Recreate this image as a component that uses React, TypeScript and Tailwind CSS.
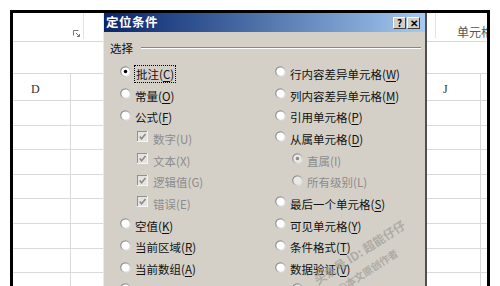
import React from "react";

const FONT = { fontFamily: '"Noto Sans CJK SC", "Noto Sans", sans-serif' };

function Radio({ checked = false, disabled = false }: { checked?: boolean; disabled?: boolean }) {
  return (
    <svg width="11" height="11" viewBox="0 0 12 12" className="shrink-0">
      <defs>
        <linearGradient id="rg" x1="0" y1="0" x2="1" y2="1">
          <stop offset="0" stopColor="#6e6e6e" />
          <stop offset="0.55" stopColor="#b8b8b8" />
          <stop offset="1" stopColor="#ffffff" />
        </linearGradient>
      </defs>
      <circle cx="6" cy="6" r="5.8" fill="url(#rg)" />
      <circle cx="6" cy="6" r="4.5" fill={disabled ? "#ebe9e5" : "#ffffff"} />
      {checked && <circle cx="6" cy="6" r="1.9" fill={disabled ? "#8a8a8a" : "#000"} />}
    </svg>
  );
}

function Check() {
  return (
    <svg width="11" height="11" viewBox="0 0 12 12" className="shrink-0">
      <rect x="0" y="0" width="12" height="12" fill="#ffffff" />
      <rect x="0" y="0" width="11" height="11" fill="#8a8a8a" />
      <rect x="1" y="1" width="10" height="10" fill="#e6e4e0" />
      <polyline points="3,6 5,8.5 9.3,3.4" fill="none" stroke="#8a8a8a" strokeWidth="1.7" />
    </svg>
  );
}

type Item = {
  kind: "radio" | "check" | "sub";
  label: string;
  key: string;
  checked?: boolean;
  disabled?: boolean;
  focus?: boolean;
};

function Label({ label, k, disabled, focus }: { label: string; k: string; disabled?: boolean; focus?: boolean }) {
  return (
    <span
      className={
        "text-[11.5px] leading-[15px] whitespace-nowrap " +
        (disabled ? "text-[#8c8c8c] " : "text-[#111] ") +
        (focus ? "outline outline-1 outline-dotted outline-black outline-offset-0 px-[1px]" : "")
      }
    >
      {label}(<span className={disabled ? "" : "underline underline-offset-2"}>{k}</span>)
    </span>
  );
}

function Row({ item }: { item: Item }) {
  const pad = item.kind === "radio" ? "pl-0" : "pl-[17px]";
  return (
    <div className={"h-[21.7px] flex items-center " + pad}>
      {item.kind === "check" ? <Check /> : <Radio checked={item.checked} disabled={item.disabled} />}
      <div className={item.kind === "check" ? "ml-[5px]" : "ml-[4px]"}>
        <Label label={item.label} k={item.key} disabled={item.disabled} focus={item.focus} />
      </div>
    </div>
  );
}

const left: Item[] = [
  { kind: "radio", label: "批注", key: "C", checked: true, focus: true },
  { kind: "radio", label: "常量", key: "O" },
  { kind: "radio", label: "公式", key: "F" },
  { kind: "check", label: "数字", key: "U", disabled: true },
  { kind: "check", label: "文本", key: "X", disabled: true },
  { kind: "check", label: "逻辑值", key: "G", disabled: true },
  { kind: "check", label: "错误", key: "E", disabled: true },
  { kind: "radio", label: "空值", key: "K" },
  { kind: "radio", label: "当前区域", key: "R" },
  { kind: "radio", label: "当前数组", key: "A" },
  { kind: "radio", label: "对象", key: "B" },
];

const right: Item[] = [
  { kind: "radio", label: "行内容差异单元格", key: "W" },
  { kind: "radio", label: "列内容差异单元格", key: "M" },
  { kind: "radio", label: "引用单元格", key: "P" },
  { kind: "radio", label: "从属单元格", key: "D" },
  { kind: "sub", label: "直属", key: "I", checked: true, disabled: true },
  { kind: "sub", label: "所有级别", key: "L", disabled: true },
  { kind: "radio", label: "最后一个单元格", key: "S" },
  { kind: "radio", label: "可见单元格", key: "Y" },
  { kind: "radio", label: "条件格式", key: "T" },
  { kind: "radio", label: "数据验证", key: "V" },
  { kind: "sub", label: "全部", key: "L", disabled: true },
];

function SheetRow() {
  return (
    <div className="h-[24.6px] border-b border-[#dadada] flex">
      <div className="w-[58px] border-r border-[#dadada]" />
      <div className="flex-1" />
      <div className="w-[69px] border-r border-[#dadada]" />
      <div className="w-[6px]" />
    </div>
  );
}

function CaptionButton({ children }: { children: React.ReactNode }) {
  return (
    <div className="w-[13px] h-[12px] bg-[#d4d0c8] border-t border-l border-white border-r border-b border-r-[#404040] border-b-[#404040] flex items-center justify-center text-[10px] leading-none font-bold text-black">
      {children}
    </div>
  );
}

export default function App() {
  return (
    <div className="w-[500px] h-[286px] bg-white overflow-hidden pl-[10px] pt-[10px]" style={FONT}>
      <div className="relative w-[480px] h-[300px] border-[3px] border-b-0 border-black bg-white">
        {/* spreadsheet underneath */}
        <div className="flex flex-col">
          <div className="h-[29px] border-b border-[#d8d8d8] flex">
            <div className="w-[70px] relative">
              <svg width="8" height="7" viewBox="0 0 8 7" className="absolute left-[60px] top-[17px]">
                <path d="M0.5 0.5 H5.5 M0.5 0.5 V5.5" stroke="#777" fill="none" />
                <path d="M3 3 L6.5 6.5 M4 6.5 H6.5 V4" stroke="#777" fill="none" />
              </svg>
            </div>
            <div className="w-px h-[26px] bg-[#e2e2e2]" />
            <div className="flex-1" />
            <div className="w-[52px] flex">
              <div className="w-px h-[25px] bg-[#e2e2e2]" />
              <div className="flex-1 pl-[21px] pt-[11px] text-[12px] leading-[15px] text-[#555] whitespace-nowrap overflow-hidden">
                单元格
              </div>
            </div>
          </div>
          <div className="h-[32px] border-b border-[#d8d8d8]" />
          <div className="h-[27px] border-b border-[#d8d8d8] flex">
            <div
              className="w-[58px] border-r border-[#d8d8d8] flex items-end justify-start pl-[18px] pb-[2px] text-[12px] text-[#333]"
              style={{ fontFamily: '"Liberation Serif", serif' }}
            >
              D
            </div>
            <div className="flex-1" />
            <div
              className="w-[69px] border-r border-[#d8d8d8] flex items-end justify-start pl-[31px] pb-[2px] text-[12px] text-[#333]"
              style={{ fontFamily: '"Liberation Serif", serif' }}
            >
              J
            </div>
            <div className="w-[6px]" />
          </div>
          {Array.from({ length: 8 }).map((_, i) => (
            <SheetRow key={i} />
          ))}
        </div>

        {/* dialog window */}
        <div className="absolute left-[90px] top-0 w-[324px] h-[290px] bg-[#d4d0c8] border-l border-[#ece9e2] border-r-2 border-r-[#505050] flex flex-col overflow-hidden">
          <div className="h-[19px] bg-gradient-to-r from-[#0a246a] to-[#a6caf0] flex items-center justify-between pl-[2px] pr-[5px]">
            <span className="text-white font-bold text-[12.5px] leading-none tracking-[0.5px]">定位条件</span>
            <div className="flex gap-[1px]">
              <CaptionButton>?</CaptionButton>
              <CaptionButton>✕</CaptionButton>
            </div>
          </div>
          <div className="flex items-center pl-[6px] pr-[4px] mt-[9px] h-[14px]">
            <span className="text-[11.5px] leading-[14px] text-[#111]">选择</span>
            <div className="flex-1 ml-[8px] flex flex-col">
              <div className="h-px bg-[#8a8780]" />
              <div className="h-px bg-white" />
            </div>
          </div>
          <div className="mt-[6px] flex pl-[16px]">
            <div className="w-[155px] flex flex-col">
              {left.map((it, i) => (
                <Row key={i} item={it} />
              ))}
            </div>
            <div className="flex-1 flex flex-col">
              {right.map((it, i) => (
                <Row key={i} item={it} />
              ))}
            </div>
          </div>

          {/* watermark */}
          <div className="absolute left-[211px] top-[261px] -rotate-[33deg] origin-left text-[#a29f98] font-bold text-[12px] leading-[14px] whitespace-nowrap opacity-75 pointer-events-none">
            头条号 ID: 超能仔仔
          </div>
          <div className="absolute left-[234px] top-[271px] -rotate-[33deg] origin-left text-[#a29f98] font-bold text-[10px] leading-[12px] whitespace-nowrap opacity-75 pointer-events-none">
            @本文原创作者
          </div>
        </div>
      </div>
    </div>
  );
}
